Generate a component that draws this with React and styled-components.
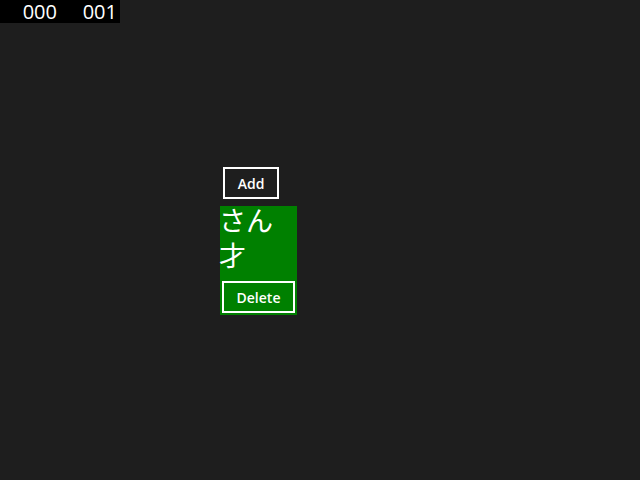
import React from 'react';
import styled, { createGlobalStyle } from 'styled-components';

const Global = createGlobalStyle`
    html, body {
        margin: 0;
        padding: 0;
        background-color: #1e1e1e;
        color: #ffffff;
        font-family: "Open Sans", "Noto Sans CJK JP", sans-serif;
    }
`;

const Page = styled.div`
    width: 640px;
    height: 480px;
    display: flex;
    flex-direction: column;
`;

const Counter = styled.div`
    display: flex;
    align-items: center;
    width: 120px;
    height: 23px;
    background-color: #000000;
`;

const Cell = styled.span`
    width: 60px;
    padding-right: 3px;
    box-sizing: border-box;
    text-align: right;
    font-size: 20px;
    line-height: 20px;
`;

const Stack = styled.div`
    display: flex;
    flex-direction: column;
    align-items: flex-start;
    margin: 144px 0 0 220px;
    gap: 7px;
`;

const Button = styled.button`
    box-sizing: border-box;
    height: 32px;
    width: ${(p) => p.$width}px;
    margin-left: ${(p) => p.$offset}px;
    background: transparent;
    border: 2px solid #ffffff;
    color: #ffffff;
    font-family: "Open Sans", sans-serif;
    font-size: 14px;
    font-weight: 600;
    padding: 0;
    cursor: pointer;
`;

const Card = styled.div`
    box-sizing: border-box;
    width: 77px;
    height: 109px;
    background-color: #008000;
    display: flex;
    flex-direction: column;
    padding: 0 0 2px 2px;
`;

const Words = styled.div`
    display: flex;
    flex-direction: column;
    gap: 8px;
    margin: 0 0 0 -3px;
`;

const Word = styled.div`
    font-family: "Noto Sans CJK JP", sans-serif;
    font-size: 27px;
    line-height: 27px;
`;

const items = ['さん', '才'];

export default function App() {
    return (
        <Page>
            <Global />
            <Counter>
                <Cell>000</Cell>
                <Cell>001</Cell>
            </Counter>
            <Stack>
                <Button $width={56} $offset={3}>Add</Button>
                <Card>
                    <Words>
                        {items.map((w) => (
                            <Word key={w}>{w}</Word>
                        ))}
                    </Words>
                    <Button $width={73} $offset={0} style={{ marginTop: 'auto' }}>Delete</Button>
                </Card>
            </Stack>
        </Page>
    );
}
